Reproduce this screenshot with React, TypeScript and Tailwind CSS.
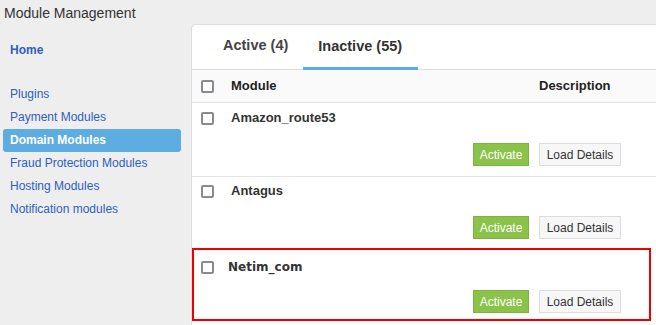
import React from "react";

const Checkbox = () => (
  <span className="block w-[13px] h-[13px] border-2 border-[#8a8a92] rounded-[2px] bg-white shrink-0" />
);

const Buttons = () => (
  <div className="flex justify-end gap-[10px]">
    <button className="h-[23px] w-[56px] bg-[#8bc34a] border border-[#7cb342] text-white text-[12px] leading-none">Activate</button>
    <button className="h-[23px] w-[82px] bg-[#f7f7f7] border border-[#dddddd] text-[#333] text-[12px] leading-none">Load Details</button>
  </div>
);

export default function App() {
  const items = ["Plugins", "Payment Modules", "Domain Modules", "Fraud Protection Modules", "Hosting Modules", "Notification modules"];
  return (
    <div className="w-[656px] h-[325px] bg-[#eeeeee] overflow-hidden flex flex-col" style={{ fontFamily: '"Liberation Sans", Arial, sans-serif' }}>
      <div className="h-[24px] shrink-0 pl-[4px] pt-[4px] text-[14px] leading-[18px] text-[#333]">Module Management</div>
      <div className="flex flex-1 min-h-0">
        <div className="w-[191px] shrink-0 pt-[15px]">
          <div className="h-[23px] pl-[10px] text-[12px] leading-[23px] font-bold text-[#2d5fc0]">Home</div>
          <div className="h-[21px]" />
          {items.map((t) => (
            <div key={t} className={`mx-[3px] mr-[10px] h-[23px] pl-[7px] rounded-[3px] text-[12px] leading-[23px] ${t === "Domain Modules" ? "bg-[#5dade2] text-white font-bold" : "text-[#2d5fc0]"}`}>
              {t}
            </div>
          ))}
        </div>
        <div className="flex-1 bg-white border-l border-t border-[#dddddd] rounded-tl-[5px] flex flex-col">
          <div className="h-[45px] flex items-end border-b border-[#dddddd] pl-[17px] shrink-0">
            <div className="h-[44px] pl-[14px] pr-[15px] pb-[3px] flex items-center text-[14.5px] font-bold text-[#444]">Active (4)</div>
            <div className="h-[44px] pl-[15px] pr-[16px] flex items-center text-[14.5px] font-bold text-[#333] border-b-[3px] border-[#5dade2] -mb-[1px]">Inactive (55)</div>
          </div>
          <div className="h-[33px] shrink-0 bg-[#fafafa] border-b border-[#e3e3e3] flex items-center pl-[9px]">
            <Checkbox />
            <span className="ml-[17px] text-[13px] font-bold text-[#222]">Module</span>
            <span className="ml-auto w-[117px] text-[13px] font-bold text-[#222]">Description</span>
          </div>
          <div className="border-b border-[#e3e3e3] pl-[9px] pr-[35px] pt-[8px] pb-[10px]">
            <div className="h-[14px] flex items-center">
              <Checkbox />
              <span className="ml-[17px] text-[13px] font-bold text-[#333]">Amazon_route53</span>
            </div>
            <div className="mt-[18px]">
              <Buttons />
            </div>
          </div>
          <div className="pl-[9px] pr-[35px] pt-[7px] pb-[9px]">
            <div className="h-[14px] flex items-center">
              <Checkbox />
              <span className="ml-[17px] text-[13px] font-bold text-[#333]">Antagus</span>
            </div>
            <div className="mt-[18px]">
              <Buttons />
            </div>
          </div>
          <div className="mr-[5px] border-2 border-[#ee0000] pl-[7px] pr-[28px] pt-[10px] pb-[6px]">
            <div className="h-[14px] flex items-center">
              <Checkbox />
              <span className="ml-[14px] text-[12px] font-bold text-[#333]" style={{ fontFamily: '"DejaVu Sans", Verdana, sans-serif' }}>Netim_com</span>
            </div>
            <div className="mt-[16px]">
              <Buttons />
            </div>
          </div>
        </div>
      </div>
    </div>
  );
}
